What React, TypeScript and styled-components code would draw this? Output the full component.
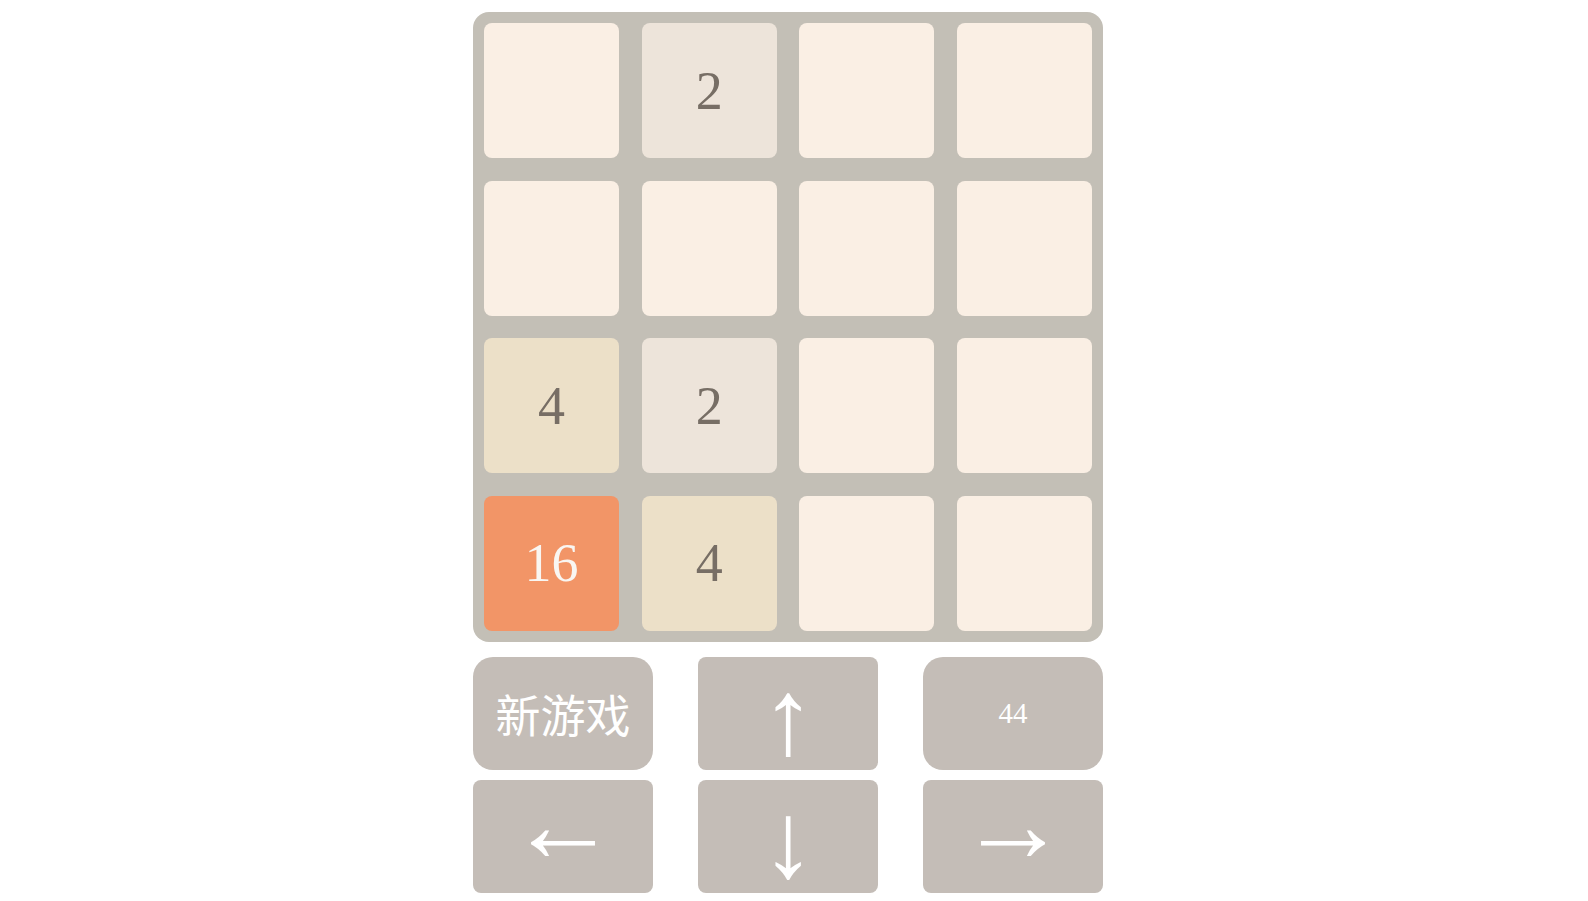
import React from 'react'
import styled, { createGlobalStyle } from 'styled-components'

const GlobalStyle = createGlobalStyle`
  html, body {
    margin: 0;
    padding: 0;
    background: #ffffff;
  }
`

const Page = styled.main`
  display: flex;
  justify-content: center;
  padding: 12px 12px 0 0;
`

const Game = styled.div`
  display: flex;
  flex-direction: column;
  gap: 15px;
  width: 630px;
`

const Board = styled.div`
  display: grid;
  grid-template-columns: repeat(4, 135px);
  grid-auto-rows: 135px;
  gap: 22.67px;
  padding: 11px;
  background: #c3bfb6;
  border-radius: 16px;
`

const tileColors: Record<number, { bg: string; fg: string }> = {
  0: { bg: '#faefe4', fg: '#776e65' },
  2: { bg: '#ede4da', fg: '#776e65' },
  4: { bg: '#ece0c8', fg: '#776e65' },
  8: { bg: '#f2b179', fg: '#f9f6f2' },
  16: { bg: '#f29567', fg: '#f9f6f2' },
}

const Tile = styled.div<{ $value: number }>`
  display: flex;
  align-items: center;
  justify-content: center;
  border-radius: 8px;
  background: ${({ $value }) => tileColors[$value].bg};
  color: ${({ $value }) => tileColors[$value].fg};
  font-family: 'Liberation Serif', 'Times New Roman', serif;
  font-size: 54px;
  line-height: 1;
`

const Controls = styled.div`
  display: grid;
  grid-template-columns: repeat(3, 180px);
  grid-auto-rows: 113px;
  column-gap: 45px;
  row-gap: 10px;
`

const Key = styled.button<{ $round?: boolean }>`
  display: flex;
  align-items: center;
  justify-content: center;
  padding: 0;
  border: none;
  background: #c4bdb7;
  color: #ffffff;
  border-radius: ${({ $round }) => ($round ? '20px' : '8px')};
  font-family: 'Liberation Serif', 'Times New Roman', serif;
  font-size: 29px;
  line-height: 1;
  cursor: pointer;
`

// vertical arrows sit a bit low, horizontal ones a bit high
const ArrowKey = styled(Key)<{ $vertical?: boolean }>`
  font-size: 108px;
  line-height: 0.8;
  padding: ${({ $vertical }) => ($vertical ? '9px 0 0' : '0 0 22px')};
`

const NewGameKey = styled(Key)`
  font-family: 'Noto Sans CJK SC', 'Noto Sans', sans-serif;
  font-size: 45px;
  font-weight: 400;
`

const grid = [
  [0, 2, 0, 0],
  [0, 0, 0, 0],
  [4, 2, 0, 0],
  [16, 4, 0, 0],
]

export default function App() {
  return (
    <>
      <GlobalStyle />
      <Page>
        <Game>
          <Board>
            {grid.flat().map((v, i) => (
              <Tile key={i} $value={v}>
                {v > 0 ? v : ''}
              </Tile>
            ))}
          </Board>
          <Controls>
            <NewGameKey $round>新游戏</NewGameKey>
            <ArrowKey $vertical>↑</ArrowKey>
            <Key $round>44</Key>
            <ArrowKey>←</ArrowKey>
            <ArrowKey $vertical>↓</ArrowKey>
            <ArrowKey>→</ArrowKey>
          </Controls>
        </Game>
      </Page>
    </>
  )
}
